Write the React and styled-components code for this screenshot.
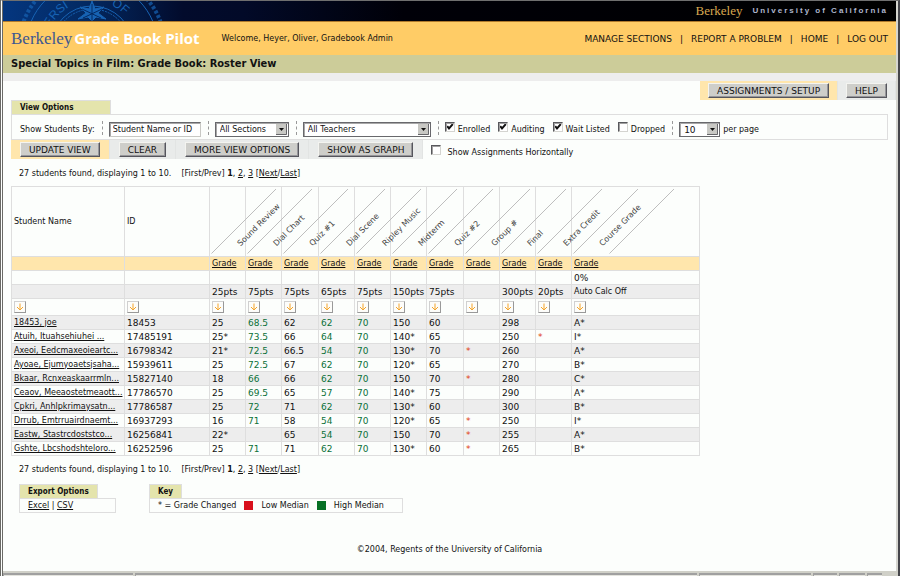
import React from 'react';
import styled, { createGlobalStyle, css } from 'styled-components';

const GlobalStyle = createGlobalStyle`
  *, *::before, *::after { box-sizing: border-box; }
  html, body { margin: 0; padding: 0; }
  body, button, input, select {
    font-family: 'DejaVu Sans', Verdana, sans-serif;
    font-size: 8px;
    color: #111;
  }
  a { color: inherit; }
`;

const line = '#dedede';

const Window = styled.div`
  min-height: 100vh;
  display: flex;
  flex-direction: column;
  background: #fcfefc;
  border-top: 1px solid #6f6f6f;
  border-left: 3px double #6a6a66;
  border-right: 2px solid #45454a;
  line-height: 10px;
`;

const Content = styled.div`
  flex: 1;
  display: flex;
  flex-direction: column;
  border-right: 2px solid #d6d6d0;
`;

const TopBar = styled.div`
  display: flex;
  align-items: center;
  justify-content: space-between;
  height: 21px;
  padding-right: 8px;
  background: linear-gradient(90deg, #04367f 0, #032a63 80px, #020b2c 180px, #020a28 240px, #000008 400px, #000 100%);
  border-bottom: 1px solid #b07a2c;
`;

const University = styled.div`
  display: flex;
  align-items: center;
  gap: 10px;
`;

const GoldWordmark = styled.span`
  font: 13px/20px 'Liberation Serif', serif;
  color: #d9a850;
`;

const Tracked = styled.span`
  font: bold 8px/20px 'Liberation Sans', Arial, sans-serif;
  letter-spacing: 2px;
  color: #aeb6cc;
`;

const Header = styled.header`
  display: flex;
  align-items: center;
  height: 33px;
  padding: 0 8px;
  background: #ffcc66;
`;

const Brand = styled.div`
  display: flex;
  align-items: baseline;
  gap: 2px;
  white-space: nowrap;
`;

const BlueWordmark = styled.span`
  font: 17px/24px 'Liberation Serif', serif;
  color: #3d5791;
`;

const ProductName = styled.h1`
  margin: 0;
  font: bold 15px/24px 'Open Sans', sans-serif;
  color: #fff;
`;

const Welcome = styled.span`
  flex: 1;
  margin-left: 22px;
  white-space: nowrap;
`;

const Nav = styled.nav`
  display: flex;
  gap: 8px;
  font-size: 9px;
  white-space: nowrap;
  a { text-decoration: none; }
`;

const TitleBar = styled.h2`
  margin: 0;
  padding: 0 8px;
  background: #cccc99;
  font: bold 11px/18px 'DejaVu Sans Condensed', 'DejaVu Sans', sans-serif;
`;

const Strip = styled.div`
  height: 8px;
  background: #ededed;
`;

const ActionGroup = styled.div`
  display: flex;
  width: fit-content;
  margin-left: ${(p) => (p.$end ? 'auto' : '0')};
`;

const ActionCell = styled.div`
  padding: ${(p) => (p.$wide ? '2px 8px' : '2px 9px')};
  background: ${(p) => (p.$primary ? '#ffe6ac' : '#e9ebea')};
  border-right: 1px solid #e2e4e3;
`;

const Button = styled.button`
  display: block;
  height: 15px;
  padding: 0 8px;
  background: #cececa;
  border: 1px solid;
  border-color: #f4f4f0 #55555c #55555c #f4f4f0;
  box-shadow: inset -1px -1px 0 #96969a;
  font-size: 9px;
  line-height: 12px;
  white-space: nowrap;
`;

const Main = styled.main`
  flex: 1;
  padding: 0 8px;
`;

const Tab = styled.h3`
  width: fit-content;
  min-width: ${(p) => (p.$wide ? '100px' : '0')};
  margin: 0;
  padding: 0 8px;
  background: #e4e4ac;
  border: 1px solid ${line};
  border-bottom: 0;
  font: bold 8px/13px 'DejaVu Sans Condensed', 'DejaVu Sans', sans-serif;
`;

const FilterPanel = styled.form`
  display: flex;
  align-items: center;
  height: 26px;
  padding: 5px 8px 0;
  border: 1px solid ${line};
  white-space: nowrap;
`;

const Divider = styled.span`
  height: 14px;
  margin: 0 6px 4px 7px;
  border-left: 1px dashed #999;
`;

const sunken = css`
  height: 15px;
  background: #fff;
  border: 1px solid;
  border-color: #68686c #c8c8c4 #c8c8c4 #68686c;
  box-shadow: inset 1px 1px 0 #a8a8a8;
`;

const TextInput = styled.input`
  ${sunken}
  width: 92px;
  padding: 0 3px;
  border-radius: 0;
`;

const SelectFrame = styled.span`
  position: relative;
  width: ${(p) => p.$width};
  border: 1px solid #68686c;
  select {
    ${sunken}
    display: block;
    width: 100%;
    height: 13px;
    padding: 0 14px 0 4px;
    appearance: none;
    border-radius: 0;
    font-size: ${(p) => (p.$numeric ? '9px' : '8px')};
    border: 0;
  }
  svg {
    position: absolute;
    top: 1px;
    right: 1px;
    pointer-events: none;
  }
`;

const CheckGroup = styled.div`
  display: flex;
  gap: 8px;
`;

const CheckLabel = styled.label`
  display: flex;
  align-items: center;
  gap: 3px;
`;

const tick = encodeURIComponent(
  "<svg xmlns='http://www.w3.org/2000/svg' viewBox='0 0 8 8'><path d='M1.2 3.2 L3 5.4 L6.8 1.2' fill='none' stroke='#111' stroke-width='2'/></svg>"
);

const Checkbox = styled.input`
  width: 10px;
  height: 10px;
  margin: 0 0 6px;
  appearance: none;
  background: #fff;
  border: 1px solid;
  border-color: #58585c #d4d4d0 #d4d4d0 #58585c;
  box-shadow: inset 1px 1px 0 #a0a0a0;
  &:checked { background: #fff url("data:image/svg+xml,${tick}") center / 8px 8px no-repeat; }
`;

const ActionRow = styled.div`
  display: flex;
  align-items: flex-start;
`;

const HorizontalOption = styled(CheckLabel)`
  margin-left: 8px;
  padding-top: 5px;
  gap: 6px;
`;

const Pager = styled.p`
  margin: 0;
  padding: ${(p) => (p.$bottom ? '9px 8px' : '8px 8px 7px')};
  white-space: pre;
`;

const Table = styled.table`
  width: 689px;
  table-layout: fixed;
  border-collapse: collapse;
  th, td {
    height: 14px;
    padding: 0 0 0 2px;
    border: 1px solid ${line};
    font-weight: normal;
    text-align: left;
    line-height: 12px;
    white-space: nowrap;
  }
`;

const Col = styled.col`
  width: ${(p) => p.$width};
`;

const Row = styled.tr`
  background: ${(p) => ({ gold: '#ffe6ac', gray: '#ededed' }[p.$tone] || 'transparent')};
  font-size: ${(p) => (p.$numeric ? '9px' : '8px')};
  && > * { height: ${(p) => p.$height || '14px'}; }
`;

const SlantCell = styled.th`
  && { padding: 0; vertical-align: bottom; }
`;

const SlantBox = styled.div`
  position: relative;
  height: 69px;
`;

const SlantLine = styled.svg`
  position: absolute;
  left: ${(p) => (p.$next ? '37px' : '1px')};
  bottom: 2px;
  pointer-events: none;
`;

const SlantText = styled.span`
  position: absolute;
  left: 32px;
  bottom: 8px;
  transform: rotate(-45deg);
  transform-origin: 0 100%;
  font-size: 8px;
  line-height: 9px;
  color: #444;
`;

const Score = styled.td`
  color: ${(p) => ({ high: '#0b7038', low: '#e03c10' }[p.$tone] || 'inherit')};
  font-weight: ${(p) => (p.$tone === 'low' ? 'bold' : 'normal')};
`;

const NameCell = styled.td`
  font-size: 8px;
`;

const SortButton = styled.button`
  display: block;
  width: 12px;
  height: 12px;
  padding: 0;
  background: #fdfdfa;
  border: 1px solid;
  border-color: #d0d0d0 #999 #999 #d0d0d0;
  svg { display: block; }
`;

const Extras = styled.div`
  display: flex;
  align-items: flex-start;
  gap: 33px;
  padding: 0 8px;
`;

const ExtraBody = styled.div`
  display: flex;
  align-items: center;
  width: ${(p) => p.$width};
  height: 15px;
  padding: 0 8px;
  border: 1px solid ${line};
  white-space: pre;
`;

const Swatch = styled.span`
  width: 9px;
  height: 9px;
  margin: 0 8px;
  background: ${(p) => p.$color};
`;

const Footer = styled.footer`
  padding: 32px 0 12px;
  text-align: center;
`;

const StatusBar = styled.div`
  display: flex;
  gap: 2px;
  height: 5px;
  padding: 2px 16px 0 0;
  background: #d0d0c8;
`;

const StatusCell = styled.span`
  flex: ${(p) => p.$grow};
  background: #e4e4de;
  border-top: 2px solid #a0a0a0;
  border-left: 1px solid #a0a0a0;
`;

const Seal = () => (
  <svg width="170" height="20" viewBox="0 0 170 20" fill="none" stroke="#1763b4" aria-hidden="true">
    <defs><path id="ring" d="M43 46 A46 46 0 0 1 135 46" /></defs>
    <circle cx="89" cy="46" r="73" strokeWidth="4" strokeDasharray="3 2" opacity="0.7" />
    <circle cx="89" cy="46" r="66" strokeWidth="1" />
    <circle cx="89" cy="46" r="41" strokeWidth="1" />
    <circle cx="89" cy="46" r="38" strokeWidth="1" strokeDasharray="2 1" />
    <g fill="#1763b4" stroke="none" fontSize="12" fontFamily="Liberation Sans, sans-serif">
      <text><textPath href="#ring" startOffset="20">ERSI</textPath></text>
      <text><textPath href="#ring" startOffset="92">OF</textPath></text>
    </g>
    <path d="M89 0 L92 8 L101 6 L95 12 L103 18 L93 16 L89 20 L85 16 L75 18 L83 12 L77 6 L86 8 Z" fill="#1763b4" />
    <path d="M89 3V20M79 8L98 17M99 8L80 17" stroke="#032a63" />
  </svg>
);

const Arrow = () => (
  <svg width="11" height="11" viewBox="0 0 11 11" aria-hidden="true">
    <path d="M0 0H11V11H0Z" fill="#c8c8c4" />
    <path d="M0 10.5H10.5V0" fill="none" stroke="#66666a" />
    <path d="M3 4H8L5.5 7Z" fill="#111" />
  </svg>
);

const Picker = ({ label, options, width, numeric }) => (
  <SelectFrame $width={width} $numeric={numeric}>
    <select aria-label={label}>{options.map((o) => <option key={o}>{o}</option>)}</select>
    <Arrow />
  </SelectFrame>
);

const Check = ({ label, checked }) => (
  <CheckLabel><Checkbox type="checkbox" defaultChecked={checked} />{label}</CheckLabel>
);

const Slash = ({ next }) => (
  <SlantLine $next={next} width="66" height="66" viewBox="0 0 66 66" aria-hidden="true">
    <path d="M0.5 65.5 L65 1" stroke="#bebebe" fill="none" />
  </SlantLine>
);

const Pagination = ({ bottom }) => (
  <Pager $bottom={bottom}>
    {'27 students found, displaying 1 to 10.    [First/Prev] '}<b>1</b>, <a href="#2">2</a>, <a href="#3">3</a>
    {' ['}<a href="#next">Next</a>/<a href="#last">Last</a>]
  </Pager>
);

const assignments = ['Sound Review', 'Dial Chart', 'Quiz #1', 'Dial Scene', 'Ripley Music', 'Midterm', 'Quiz #2', 'Group #', 'Final', 'Extra Credit', 'Course Grade'];
const points = ['25pts', '75pts', '75pts', '65pts', '75pts', '150pts', '75pts', '', '300pts', '20pts'];

const students = [
  ['18453, joe', '18453', '25', '68.5', '62', '62', '70', '150', '60', '', '298', '', 'A*'],
  ['Atuih, Ituahsehiuhei ...', '17485191', '25*', '73.5', '66', '64', '70', '140*', '65', '', '250', '*', 'I*'],
  ['Axeoi, Eedcmaxeoieartc...', '16798342', '21*', '72.5', '66.5', '54', '70', '130*', '70', '*', '260', '', 'A*'],
  ['Ayoae, Ejumyoaetsjsaha...', '15939611', '25', '72.5', '67', '62', '70', '120*', '65', '', '270', '', 'B*'],
  ['Bkaar, Rcnxeaskaarrmln...', '15827140', '18', '66', '66', '62', '70', '150', '70', '*', '280', '', 'C*'],
  ['Ceaov, Meeaostetmeaott...', '17786570', '25', '69.5', '65', '57', '70', '140*', '75', '', '290', '', 'A*'],
  ['Cpkri, Anhlpkrimaysatn...', '17786587', '25', '72', '71', '62', '70', '130*', '60', '', '300', '', 'B*'],
  ['Drrub, Emtrruairdnaemt...', '16937293', '16', '71', '58', '54', '70', '120*', '65', '*', '250', '', 'I*'],
  ['Eastw, Stastrcdoststco...', '16256841', '22*', '', '65', '54', '70', '150', '70', '*', '255', '', 'A*'],
  ['Gshte, Lbcshodshteloro...', '16252596', '25', '71', '71', '62', '70', '130*', '60', '*', '265', '', 'B*'],
];

const highColumns = [1, 3, 4];
const toneOf = (value, i) => (value === '*' ? 'low' : highColumns.includes(i) ? 'high' : undefined);

const Roster = () => (
  <Table>
    <colgroup>
      <Col $width="113px" /><Col $width="85px" />
      {points.map((_, i) => <Col key={i} $width={i === 2 || i === 6 ? '37px' : '36px'} />)}
      <Col />
    </colgroup>
    <thead>
      <Row $height="70px">
        <th scope="col">Student Name</th>
        <th scope="col">ID</th>
        {assignments.map((name, i) => (
          <SlantCell key={name} scope="col">
            <SlantBox>
              <Slash />
              <SlantText>{name}</SlantText>
              {i === assignments.length - 1 && <Slash next />}
            </SlantBox>
          </SlantCell>
        ))}
      </Row>
      <Row $tone="gold">
        <td /><td />
        {assignments.map((name) => <td key={name}><a href="#grade">Grade</a></td>)}
      </Row>
      <Row $numeric>
        <td /><td />
        {points.map((_, i) => <td key={i} />)}
        <td>0%</td>
      </Row>
      <Row $tone="gray" $numeric>
        <td /><td />
        {points.map((p, i) => <td key={i}>{p}</td>)}
        <NameCell>Auto Calc Off</NameCell>
      </Row>
      <Row $height="17px">
        {['Student Name', 'ID', ...assignments].map((name) => (
          <td key={name}>
            <SortButton type="button" aria-label={`Sort by ${name}`}>
              <svg width="10" height="10" viewBox="0 0 10 10" fill="none" stroke="#f5a52a">
                <path d="M5 1.5V8M2 5L5 8L8 5" />
              </svg>
            </SortButton>
          </td>
        ))}
      </Row>
    </thead>
    <tbody>
      {students.map(([name, id, ...scores], r) => (
        <Row key={id} $tone={r % 2 === 0 ? 'gray' : undefined} $numeric>
          <NameCell><a href={`#${id}`}>{name}</a></NameCell>
          <td>{id}</td>
          {scores.map((s, i) => <Score key={i} $tone={toneOf(s, i)}>{s}</Score>)}
        </Row>
      ))}
    </tbody>
  </Table>
);

export default function App() {
  return (
    <Window>
      <GlobalStyle />
      <Content>
        <TopBar>
          <Seal />
          <University>
            <GoldWordmark>Berkeley</GoldWordmark>
            <Tracked>University of California</Tracked>
          </University>
        </TopBar>
        <Header>
          <Brand><BlueWordmark>Berkeley</BlueWordmark><ProductName>Grade Book Pilot</ProductName></Brand>
          <Welcome>Welcome, Heyer, Oliver, Gradebook Admin</Welcome>
          <Nav>
            <a href="#sections">MANAGE SECTIONS</a><span>|</span>
            <a href="#report">REPORT A PROBLEM</a><span>|</span>
            <a href="#home">HOME</a><span>|</span>
            <a href="#logout">LOG OUT</a>
          </Nav>
        </Header>
        <TitleBar>Special Topics in Film: Grade Book: Roster View</TitleBar>
        <Strip />
        <ActionGroup $end>
          <ActionCell $primary $wide><Button type="button">ASSIGNMENTS / SETUP</Button></ActionCell>
          <ActionCell $wide><Button type="button">HELP</Button></ActionCell>
        </ActionGroup>
        <Main>
          <Tab $wide>View Options</Tab>
          <FilterPanel>
            <label htmlFor="query">Show Students By:</label>
            <Divider />
            <TextInput id="query" defaultValue="Student Name or ID" />
            <Divider />
            <Picker label="Section" options={['All Sections']} width="74px" />
            <Divider />
            <Picker label="Teacher" options={['All Teachers']} width="128px" />
            <Divider />
            <CheckGroup>
              <Check label="Enrolled" checked />
              <Check label="Auditing" checked />
              <Check label="Wait Listed" checked />
              <Check label="Dropped" />
            </CheckGroup>
            <Divider />
            <CheckLabel>
              <Picker label="Students per page" options={['10']} width="41px" numeric />
              per page
            </CheckLabel>
          </FilterPanel>
          <ActionRow>
            <ActionGroup>
              <ActionCell $primary><Button type="button">UPDATE VIEW</Button></ActionCell>
              <ActionCell><Button type="button">CLEAR</Button></ActionCell>
              <ActionCell><Button type="button">MORE VIEW OPTIONS</Button></ActionCell>
              <ActionCell><Button type="button">SHOW AS GRAPH</Button></ActionCell>
            </ActionGroup>
            <HorizontalOption><Checkbox type="checkbox" />Show Assignments Horizontally</HorizontalOption>
          </ActionRow>
          <Pagination />
          <Roster />
          <Pagination bottom />
          <Extras>
            <section>
              <Tab>Export Options</Tab>
              <ExtraBody $width="97px"><a href="#excel">Excel</a> | <a href="#csv">CSV</a></ExtraBody>
            </section>
            <section>
              <Tab>Key</Tab>
              <ExtraBody $width="254px">
                * = Grade Changed<Swatch $color="#d8101c" />Low Median<Swatch $color="#067024" />High Median
              </ExtraBody>
            </section>
          </Extras>
          <Footer>©2004, Regents of the University of California</Footer>
        </Main>
      </Content>
      <StatusBar>
        <StatusCell $grow={130} /><StatusCell $grow={565} /><StatusCell $grow={112} />
        <StatusCell $grow={23} /><StatusCell $grow={25} /><StatusCell $grow={14} />
      </StatusBar>
    </Window>
  );
}
